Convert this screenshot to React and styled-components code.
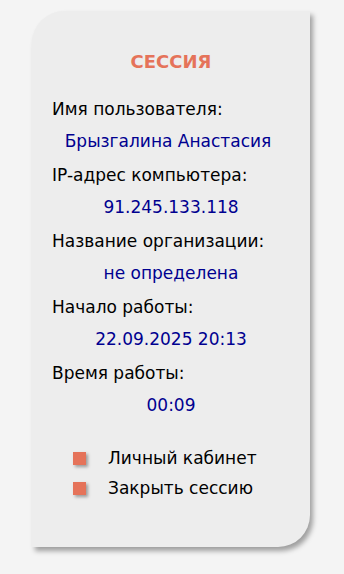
import React from "react";
import styled, { createGlobalStyle } from "styled-components";

const Global = createGlobalStyle`
  html, body { margin: 0; padding: 0; background: #f4f4f4; }
  body { font-family: "DejaVu Sans", Verdana, sans-serif; }
`;

const Page = styled.div`
  width: 344px;
  height: 574px;
  padding: 11px 0 0 32px;
  box-sizing: border-box;
`;

const Card = styled.div`
  width: 278px;
  height: 536px;
  box-sizing: border-box;
  background: #ededed;
  border-radius: 32px 0 32px 0;
  box-shadow: 3px 4px 5px rgba(0, 0, 0, 0.35);
  padding: 38px 0 0 20px;
  display: flex;
  flex-direction: column;
`;

const Title = styled.div`
  text-align: center;
  margin-right: 20px;
  color: #e5735a;
  font-weight: bold;
  font-size: 18px;
  line-height: 26px;
  margin-bottom: 24px;
`;

const Label = styled.div`
  color: #000;
  font-size: 17px;
  line-height: 20px;
  height: 20px;
  white-space: nowrap;
`;

const Value = styled.div`
  color: #000090;
  font-size: 17px;
  line-height: 20px;
  text-align: center;
  margin-right: ${(p) => (p.$wide ? "26px" : "20px")};
  margin-top: 12px;
  margin-bottom: 14px;
  white-space: nowrap;
`;

const Links = styled.ul`
  list-style: none;
  margin: 19px 0 0 0;
  padding: 0 0 0 21px;
  display: flex;
  flex-direction: column;
  gap: 10px;
`;

const LinkItem = styled.li`
  display: flex;
  align-items: center;
  gap: 22px;
  font-size: 17px;
  line-height: 20px;
  color: #000;
  cursor: pointer;
`;

const Bullet = styled.span`
  width: 13px;
  height: 13px;
  background: #e5735a;
  box-shadow: 2px 2px 3px rgba(0, 0, 0, 0.35);
  flex: none;
`;

const rows = [
  ["Имя пользователя:", "Брызгалина Анастасия", true],
  ["IP-адрес компьютера:", "91.245.133.118"],
  ["Название организации:", "не определена"],
  ["Начало работы:", "22.09.2025 20:13"],
  ["Время работы:", "00:09"],
];

export default function App() {
  return (
    <>
      <Global />
      <Page>
        <Card>
          <Title>СЕССИЯ</Title>
          {rows.map(([l, v, wide]) => (
            <React.Fragment key={l}>
              <Label>{l}</Label>
              <Value $wide={wide}>{v}</Value>
            </React.Fragment>
          ))}
          <Links>
            <LinkItem><Bullet />Личный кабинет</LinkItem>
            <LinkItem><Bullet />Закрыть сессию</LinkItem>
          </Links>
        </Card>
      </Page>
    </>
  );
}
